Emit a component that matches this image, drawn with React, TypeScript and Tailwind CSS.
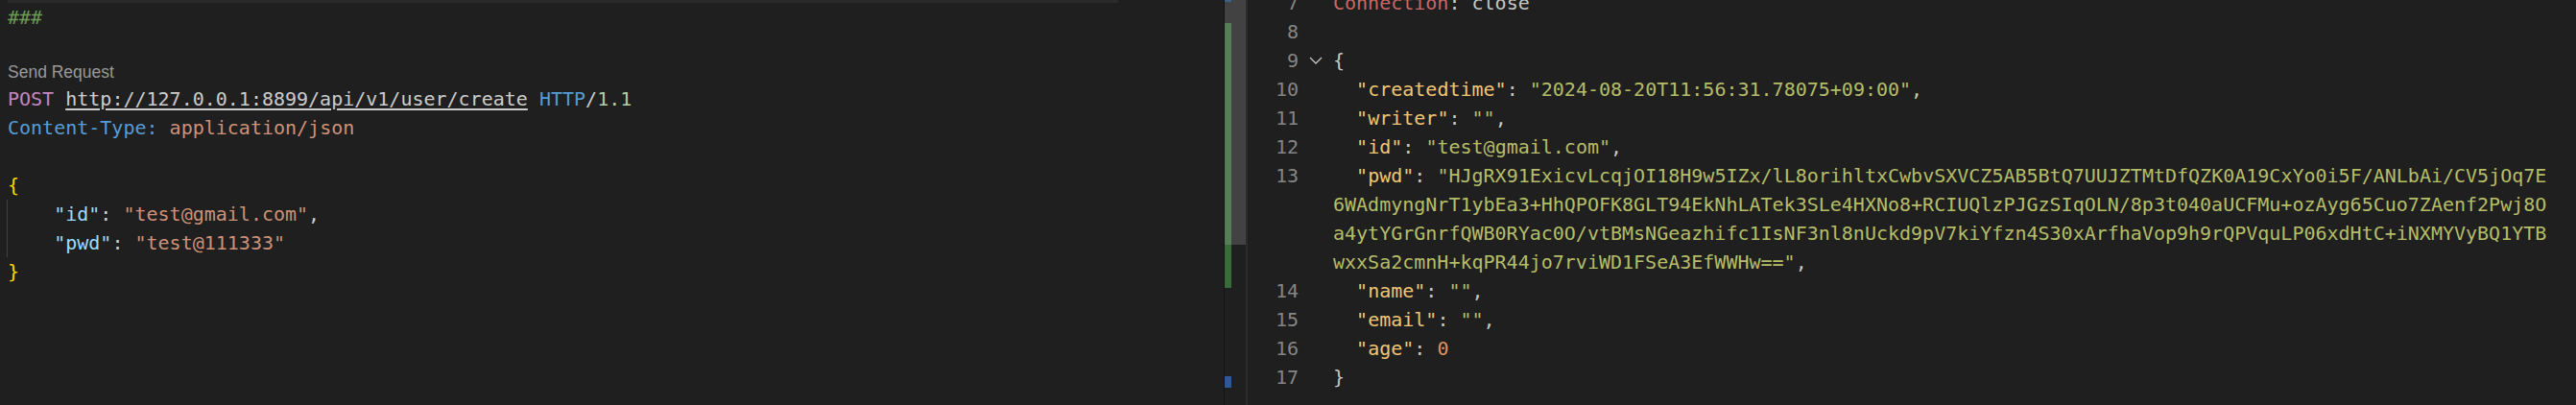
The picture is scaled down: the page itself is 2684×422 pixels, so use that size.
import React from 'react';

const mono = "font-['DejaVu_Sans_Mono','Liberation_Mono',monospace] text-[20px] leading-[30px]";

type Row = { num?: number; fold?: boolean; code: React.ReactNode };

const pwdHead = 'HJgRX91ExicvLcqjOI18H9w5IZx/lL8orihltxCwbvSXVCZ5AB5BtQ7UUJZTMtDfQZK0A19CxYo0i5F/ANLbAi/CV5jOq7E';
const pwdWrap = [
  '6WAdmyngNrT1ybEa3+HhQPOFK8GLT94EkNhLATek3SLe4HXNo8+RCIUQlzPJGzSIqOLN/8p3t040aUCFMu+ozAyg65Cuo7ZAenf2Pwj8O',
  'a4ytYGrGnrfQWB0RYac0O/vtBMsNGeazhifc1IsNF3nl8nUckd9pV7kiYfzn4S30xArfhaVop9h9rQPVquLP06xdHtC+iNXMYVyBQ1YTB',
];

function Key({ k }: { k: string }) {
  return <span className="text-[#f0c674]">"{k}"</span>;
}

function Str({ v }: { v: string }) {
  return <span className="text-[#b5bd68]">"{v}"</span>;
}

const rows: Row[] = [
  {
    num: 7,
    code: (
      <>
        <span className="text-[#cc6666]">Connection</span>: close
      </>
    ),
  },
  { num: 8, code: '' },
  { num: 9, fold: true, code: '{' },
  {
    num: 10,
    code: (
      <>
        {'  '}<Key k="createdtime" />: <Str v="2024-08-20T11:56:31.78075+09:00" />,
      </>
    ),
  },
  { num: 11, code: <>{'  '}<Key k="writer" />: <Str v="" />,</> },
  { num: 12, code: <>{'  '}<Key k="id" />: <Str v="test@gmail.com" />,</> },
  {
    num: 13,
    code: (
      <>
        {'  '}<Key k="pwd" />: <span className="text-[#b5bd68]">"{pwdHead}</span>
      </>
    ),
  },
  { code: <span className="text-[#b5bd68]">{pwdWrap[0]}</span> },
  { code: <span className="text-[#b5bd68]">{pwdWrap[1]}</span> },
  {
    code: (
      <>
        <span className="text-[#b5bd68]">wxxSa2cmnH+kqPR44jo7rviWD1FSeA3EfWWHw=="</span>,
      </>
    ),
  },
  { num: 14, code: <>{'  '}<Key k="name" />: <Str v="" />,</> },
  { num: 15, code: <>{'  '}<Key k="email" />: <Str v="" />,</> },
  { num: 16, code: <>{'  '}<Key k="age" />: <span className="text-[#de935f]">0</span></> },
  { num: 17, code: '}' },
];

function RequestEditor() {
  return (
    <div className="w-[1275px] h-full overflow-hidden">
      <div className="h-[3px] w-[1157px] ml-[8px] bg-[#2a2a2a]" />
      <div className={`pl-[8px] text-[#cccccc] ${mono}`}>
        <div className="whitespace-pre text-[#6a9955]">###</div>
        <div className="h-[30px]" />
        <div className="h-[25px] leading-[25px] font-['Liberation_Sans',Arial,sans-serif] text-[17.5px] text-[#999999]">
          Send Request
        </div>
        <div className="whitespace-pre">
          <span className="text-[#c586c0]">POST</span>{' '}
          <span className="underline decoration-2 underline-offset-[3px] decoration-[#cccccc]">
            http://127.0.0.1:8899/api/v1/user/create
          </span>{' '}
          <span className="text-[#569cd6]">HTTP</span>/<span className="text-[#b5cea8]">1.1</span>
        </div>
        <div className="whitespace-pre">
          <span className="text-[#569cd6]">Content-Type:</span>{' '}
          <span className="text-[#ce9178]">application/json</span>
        </div>
        <div className="h-[30px]" />
        <div className="text-[#ffd700]">{'{'}</div>
        <div className="-ml-px border-l border-[#404040] whitespace-pre">
          <div>
            {'    '}<span className="text-[#9cdcfe]">"id"</span>: <span className="text-[#ce9178]">"test@gmail.com"</span>,
          </div>
          <div>
            {'    '}<span className="text-[#9cdcfe]">"pwd"</span>: <span className="text-[#ce9178]">"test@111333"</span>
          </div>
        </div>
        <div className="text-[#ffd700]">{'}'}</div>
      </div>
    </div>
  );
}

function OverviewRuler() {
  return (
    <div className="relative w-[23px] h-full border-l border-[#141414]">
      <div className="absolute left-0 right-0 top-0 h-[255px] bg-[#424242]" />
      <div className="absolute left-0 top-0 w-[7px] h-[2px] bg-[#3b5f8c]" />
      <div className="absolute left-0 top-[24px] w-[7px] h-[231px] bg-[#587b58]" />
      <div className="absolute left-0 top-[255px] w-[7px] h-[45px] bg-[#386a3a]" />
      <div className="absolute left-0 top-[392px] w-[7px] h-[12px] bg-[#2b5a96]" />
    </div>
  );
}

function ResponseEditor() {
  return (
    <div className="flex-1 h-full overflow-hidden">
      <div className={`-mt-[12px] text-[#c5c8c6] ${mono}`}>
        {rows.map((r, i) => (
          <div key={i} className="flex h-[30px]">
            <div className="w-[53px] text-right text-[#858585]">{r.num ?? ''}</div>
            <div className="w-[36px] flex items-center justify-center">
              {r.fold && (
                <svg width="14" height="8" viewBox="0 0 14 8" fill="none">
                  <polyline points="1,1 7,7 13,1" stroke="#c5c5c5" strokeWidth="1.3" />
                </svg>
              )}
            </div>
            <div className="whitespace-pre">{r.code}</div>
          </div>
        ))}
      </div>
    </div>
  );
}

export default function App() {
  return (
    <div className="w-[2684px] h-[422px] bg-[#1f1f1f] flex overflow-hidden">
      <RequestEditor />
      <OverviewRuler />
      <div className="w-[2px] h-full bg-[#2b2b2b]" />
      <ResponseEditor />
    </div>
  );
}
